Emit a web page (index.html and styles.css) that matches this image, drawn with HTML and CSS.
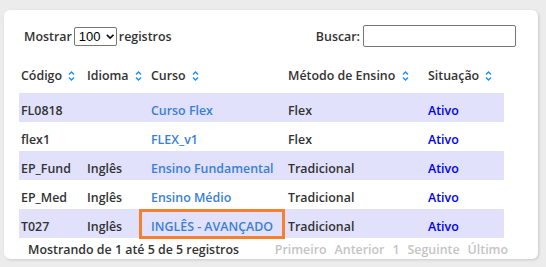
FILE: index.html
```html
<!DOCTYPE html>
<html>
<head>
    <title>Cursos</title>
    <link rel="stylesheet" href="styles.css">
</head>
<body>
    <div class="panel">
        <div class="toolbar">
            <label class="length">Mostrar
                <span class="select">100
                    <svg width="10" height="7" viewBox="0 0 10 7"><path d="M1 1.5 L5 5.5 L9 1.5" fill="none" stroke="#111" stroke-width="2"/></svg>
                </span>
                registros</label>
            <label class="search">Buscar: <span class="search-input"></span></label>
        </div>
        <table class="courses">
            <colgroup>
                <col class="c-code"><col class="c-lang"><col class="c-course"><col class="c-method"><col class="c-status">
            </colgroup>
            <thead>
                <tr>
                    <th>Código <svg class="sort" width="7" height="10" viewBox="0 0 7 10"><path d="M1 3.5 L3.5 1 L6 3.5 M1 6.5 L3.5 9 L6 6.5" fill="none" stroke="#1e8cf0" stroke-width="1.4"/></svg></th>
                    <th>Idioma <svg class="sort" width="7" height="10" viewBox="0 0 7 10"><path d="M1 3.5 L3.5 1 L6 3.5 M1 6.5 L3.5 9 L6 6.5" fill="none" stroke="#1e8cf0" stroke-width="1.4"/></svg></th>
                    <th>Curso <svg class="sort" width="7" height="10" viewBox="0 0 7 10"><path d="M1 3.5 L3.5 1 L6 3.5 M1 6.5 L3.5 9 L6 6.5" fill="none" stroke="#1e8cf0" stroke-width="1.4"/></svg></th>
                    <th>Método de Ensino <svg class="sort" width="7" height="10" viewBox="0 0 7 10"><path d="M1 3.5 L3.5 1 L6 3.5 M1 6.5 L3.5 9 L6 6.5" fill="none" stroke="#1e8cf0" stroke-width="1.4"/></svg></th>
                    <th>Situação <svg class="sort" width="7" height="10" viewBox="0 0 7 10"><path d="M1 3.5 L3.5 1 L6 3.5 M1 6.5 L3.5 9 L6 6.5" fill="none" stroke="#1e8cf0" stroke-width="1.4"/></svg></th>
                </tr>
            </thead>
            <tbody>
                <tr class="odd">
                    <td>FL0818</td><td></td><td><a href="#">Curso Flex</a></td><td>Flex</td><td class="status">Ativo</td>
                </tr>
                <tr>
                    <td>flex1</td><td></td><td><a href="#">FLEX_v1</a></td><td>Flex</td><td class="status">Ativo</td>
                </tr>
                <tr class="odd">
                    <td>EP_Fund</td><td>Inglês</td><td><a href="#">Ensino Fundamental</a></td><td>Tradicional</td><td class="status">Ativo</td>
                </tr>
                <tr>
                    <td>EP_Med</td><td>Inglês</td><td><a href="#">Ensino Médio</a></td><td>Tradicional</td><td class="status">Ativo</td>
                </tr>
                <tr class="odd">
                    <td>T027</td><td>Inglês</td><td class="marked"><a href="#">INGLÊS - AVANÇADO</a></td><td>Tradicional</td><td class="status">Ativo</td>
                </tr>
            </tbody>
        </table>
        <div class="footer">
            <div class="info">Mostrando de 1 até 5 de 5 registros</div>
            <div class="paging">
                <span>Primeiro</span><span>Anterior</span><span>1</span><span>Seguinte</span><span>Último</span>
            </div>
        </div>
    </div>
</body>
</html>
```

FILE: styles.css
```css
body {
    margin: 0;
    padding: 10px 8px 8px 4px;
    background-color: #ececec;
    font-family: "Open Sans", "Noto Sans", sans-serif;
    font-size: 12.4px;
    font-weight: 600;
    color: #333;
}
.panel {
    background-color: #fff;
    border-radius: 6px;
    box-shadow: 1px 1px 3px rgba(0, 0, 0, 0.15);
    padding: 15px 0 0 15px;
    height: 249px;
    box-sizing: border-box;
}
.toolbar {
    display: flex;
    justify-content: space-between;
    align-items: center;
    width: 492px;
    padding-left: 5px;
    height: 22px;
}
.length {
    display: flex;
    align-items: center;
    gap: 2px;
}
.select {
    display: inline-flex;
    align-items: center;
    gap: 5px;
    height: 17px;
    width: 35px;
    padding: 0 2px 0 4px;
    border: 1px solid #767676;
    border-radius: 2px;
    font-family: "Liberation Sans", Arial, sans-serif;
    font-weight: 400;
    font-size: 13px;
    color: #000;
}
.search {
    display: flex;
    align-items: center;
    gap: 3px;
}
.search-input {
    display: inline-block;
    width: 151px;
    height: 20px;
    border: 1px solid #767676;
    border-radius: 2px;
}
.courses {
    border-collapse: collapse;
    table-layout: fixed;
    width: 485px;
    margin-top: 18px;
}
.c-code { width: 66px; }
.c-lang { width: 64px; }
.c-course { width: 137px; }
.c-method { width: 140px; }
.c-status { width: 78px; }
.courses th {
    text-align: left;
    font-weight: 600;
    padding: 0 2px 8px 2px;
    height: 20px;
    white-space: nowrap;
}
.sort {
    vertical-align: -1px;
    margin-left: 3px;
}
.courses td {
    height: 29px;
    padding: 5px 2px 0 2px;
    box-sizing: border-box;
    white-space: nowrap;
}
.courses tr.odd td {
    background-color: #e1e1fc;
}
.courses a {
    color: #3a7fd6;
    text-decoration: none;
}
.status {
    color: #0000f0;
}
.marked {
    position: relative;
}
.marked::after {
    content: "";
    position: absolute;
    left: -10px;
    top: 0;
    width: 140px;
    height: 24px;
    border: 3px solid #f7802f;
}
.footer {
    display: flex;
    justify-content: space-between;
    width: 480px;
    padding-left: 9px;
    margin-top: 3px;
}
.paging {
    display: flex;
    gap: 8px;
    color: #c4c4c4;
}
```
